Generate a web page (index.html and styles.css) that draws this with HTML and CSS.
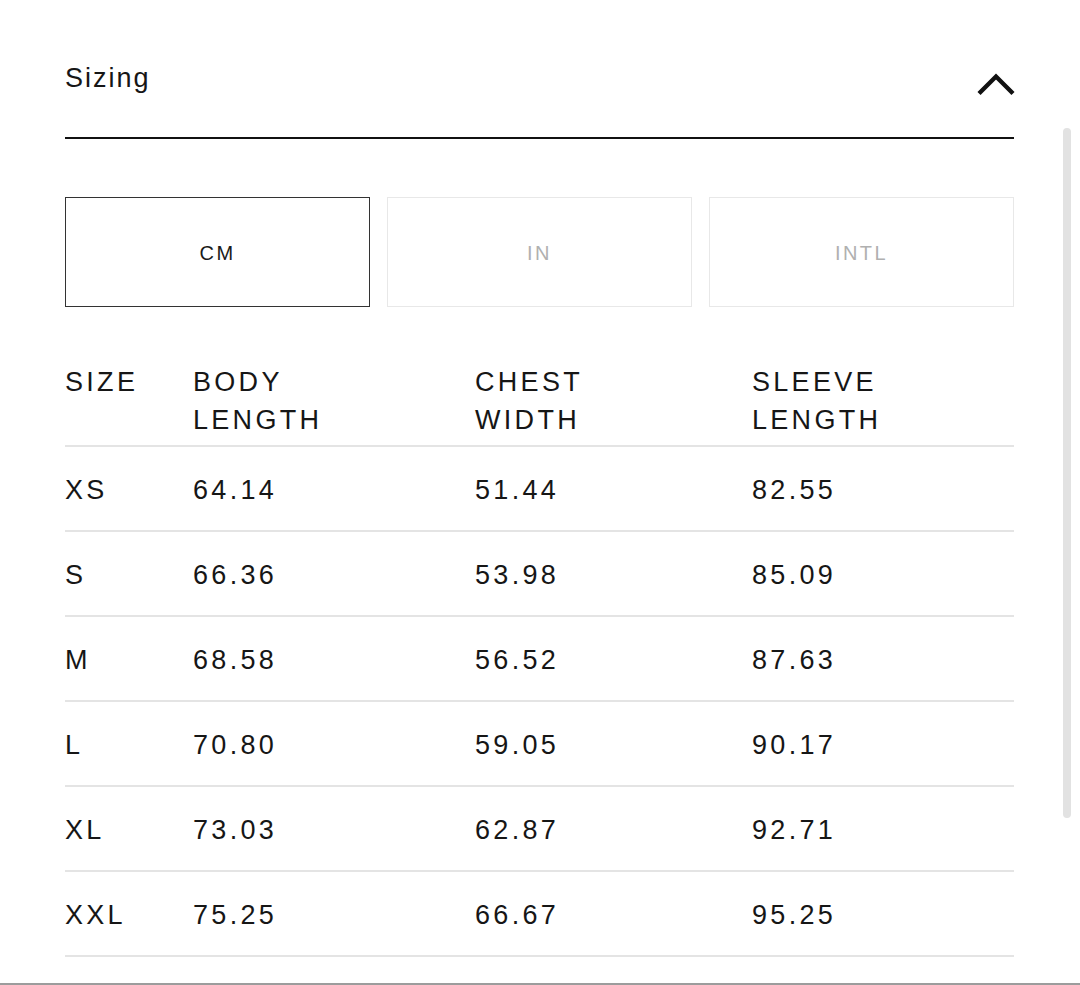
FILE: index.html
```html
<!DOCTYPE html>
<html lang="en">
<head>
<meta charset="utf-8">
<title>Sizing</title>
<link rel="stylesheet" href="styles.css">
</head>
<body>
<div class="page">
  <section class="panel">
    <header class="panel-head">
      <h2 class="panel-title">Sizing</h2>
      <svg class="chevron" width="40" height="26" viewBox="0 0 40 26" aria-hidden="true">
        <polyline points="3,21.5 20,4.5 37,21.5" fill="none" stroke="#111" stroke-width="4.4" stroke-linecap="butt" stroke-linejoin="miter"/>
      </svg>
    </header>
    <div class="units">
      <button class="unit active">CM</button>
      <button class="unit">IN</button>
      <button class="unit">INTL</button>
    </div>
    <div class="table">
      <div class="row head">
        <div>SIZE</div><div>BODY<br>LENGTH</div><div>CHEST<br>WIDTH</div><div>SLEEVE<br>LENGTH</div>
      </div>
      <div class="row"><div>XS</div><div>64.14</div><div>51.44</div><div>82.55</div></div>
      <div class="row"><div>S</div><div>66.36</div><div>53.98</div><div>85.09</div></div>
      <div class="row"><div>M</div><div>68.58</div><div>56.52</div><div>87.63</div></div>
      <div class="row"><div>L</div><div>70.80</div><div>59.05</div><div>90.17</div></div>
      <div class="row"><div>XL</div><div>73.03</div><div>62.87</div><div>92.71</div></div>
      <div class="row"><div>XXL</div><div>75.25</div><div>66.67</div><div>95.25</div></div>
    </div>
  </section>
  <div class="scrollbar"></div>
</div>
</body>
</html>
```

FILE: styles.css
```css
html, body {
  margin: 0;
  padding: 0;
  background: #fff;
}
body {
  font-family: "Liberation Sans", Arial, sans-serif;
  color: #161616;
}
.page {
  position: relative;
  height: 983px;
  border-bottom: 2px solid #9c9c9c;
  overflow: hidden;
}
.panel {
  width: 949px;
  margin-left: 65px;
}
.panel-head {
  display: flex;
  justify-content: space-between;
  align-items: flex-start;
  height: 137px;
  border-bottom: 2px solid #111;
}
.panel-title {
  margin: 0;
  padding-top: 62px;
  font-size: 27px;
  line-height: 32px;
  font-weight: 400;
  letter-spacing: 2px;
}
.chevron {
  margin-top: 72px;
  margin-right: -2px;
}
.units {
  display: grid;
  grid-template-columns: repeat(3, 1fr);
  column-gap: 17px;
  margin-top: 58px;
}
.unit {
  height: 110px;
  background: #fff;
  border: 1px solid #e8e8e8;
  font-family: "Liberation Sans", Arial, sans-serif;
  font-size: 20px;
  letter-spacing: 2.4px;
  color: #b0b0b0;
  padding: 2px 0 0;
}
.unit.active {
  border-color: #333;
  color: #1a1a1a;
}
.table {
  margin-top: 56px;
}
.row {
  display: grid;
  grid-template-columns: 128px 282px 277px 1fr;
  box-sizing: border-box;
  height: 85px;
  padding-top: 3px;
  align-items: center;
  border-bottom: 2px solid #e4e4e4;
  font-size: 27px;
  letter-spacing: 3.3px;
}
.row.head {
  height: auto;
  padding-top: 0;
  align-items: start;
  line-height: 38px;
  padding-bottom: 6px;
}
.scrollbar {
  position: absolute;
  left: 1063px;
  top: 128px;
  width: 8px;
  height: 690px;
  border-radius: 4px;
  background: #e2e2e2;
}
```
